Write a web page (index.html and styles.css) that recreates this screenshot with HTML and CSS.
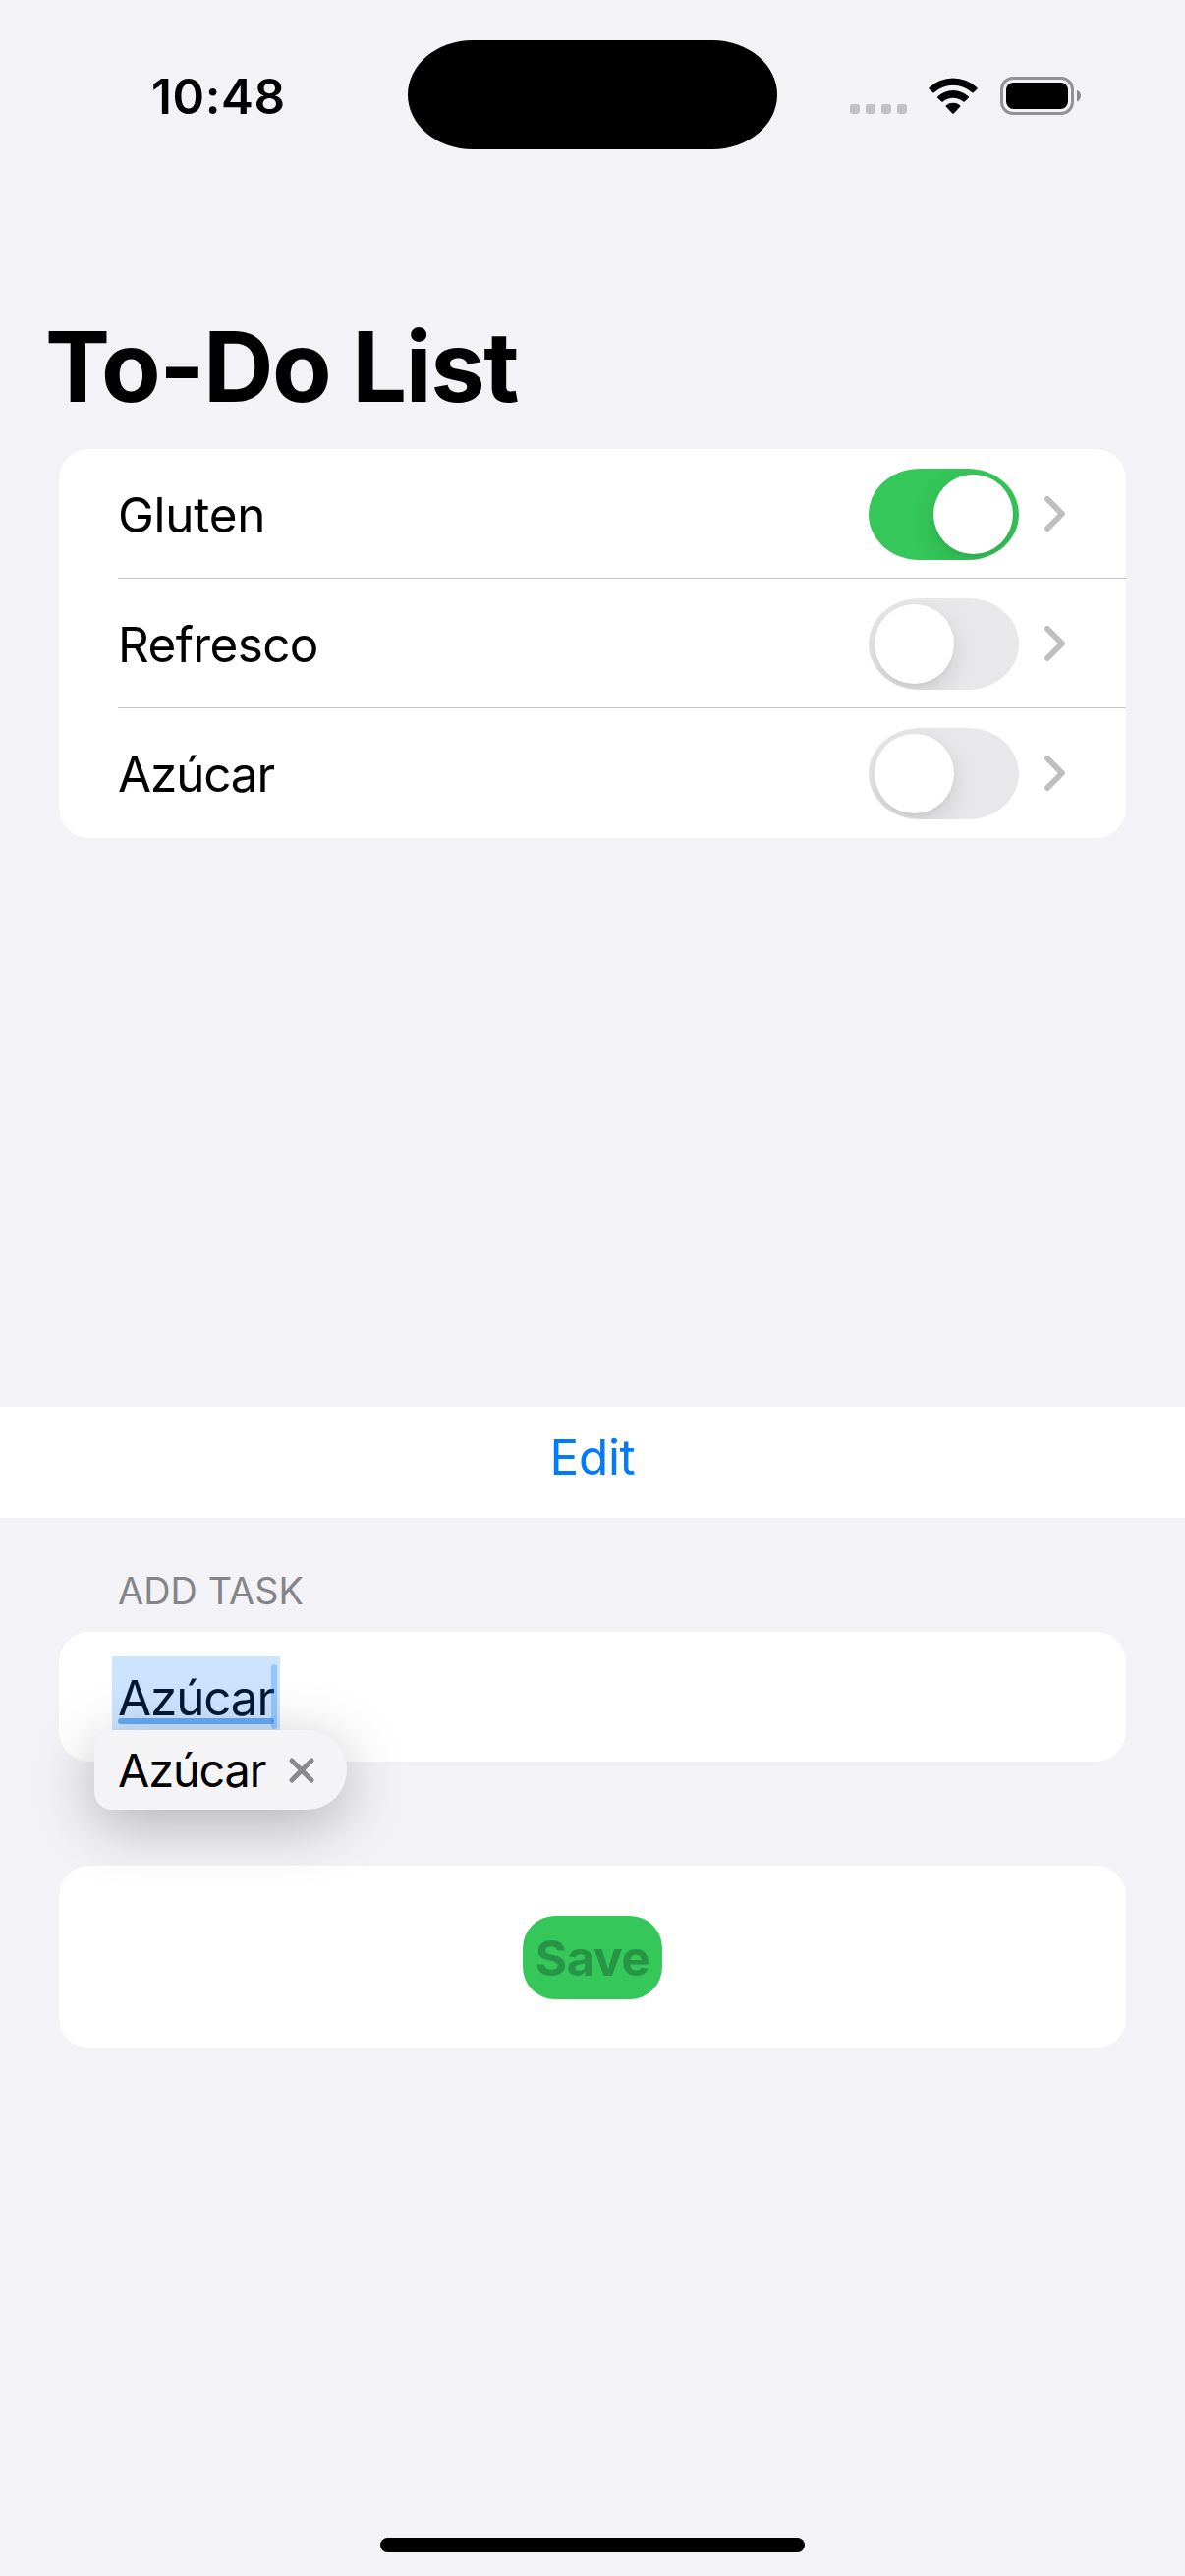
FILE: index.html
```html
<!DOCTYPE html>
<html lang="en">
<head>
<meta charset="utf-8">
<title>To-Do List</title>
<link rel="stylesheet" href="styles.css">
</head>
<body>
<div class="screen">
  <header class="status">
    <div class="time"><span>10:48</span></div>
    <div class="island"></div>
    <div class="indicators">
      <div class="dots"><i></i><i></i><i></i><i></i></div>
      <svg class="wifi" width="50" height="38" viewBox="0 0 50 38">
        <path d="M0.6 10.3A35.5 35.5 0 0 1 49.4 10.3Q50 11 49.4 11.7L45.6 15.2Q45 15.8 44.3 15.2A29 29 0 0 0 5.7 15.2Q5 15.8 4.4 15.2L0.6 11.7Q0 11 0.6 10.3Z"/>
        <path d="M9.3 19.3A23 23 0 0 1 40.7 19.3Q41.4 20 40.7 20.7L36.7 24.4Q36 25 35.3 24.4A16 16 0 0 0 14.7 24.4Q14 25 13.3 24.4L9.3 20.7Q8.6 20 9.3 19.3Z"/>
        <path d="M17.9 28.3A11.5 11.5 0 0 1 32.1 28.3Q32.8 29 32.1 29.7L25.7 36.6Q25 37.3 24.3 36.6L17.9 29.7Q17.2 29 17.9 28.3Z"/>
      </svg>
      <svg class="battery" width="82" height="39" viewBox="0 0 82 39">
        <rect x="1.5" y="1.5" width="72" height="36" rx="11.5" fill="none" stroke="#929195" stroke-width="3"/>
        <rect x="6" y="6" width="63" height="27" rx="7.5"/>
        <path d="M78 13.5Q82 15.5 82 19.5T78 25.500Z" fill="#8a898d"/>
      </svg>
    </div>
  </header>

  <h1 class="title">To-Do List</h1>

  <ul class="card list">
    <li class="row"><div class="cell"><span class="label gluten">Gluten</span><span class="toggle on"><b></b></span><svg class="chevron" width="22" height="38" viewBox="0 0 22 38"><path d="M3 4L18 19L3 34"/></svg></div></li>
    <li class="row"><div class="cell"><span class="label refresco">Refresco</span><span class="toggle"><b></b></span><svg class="chevron" width="22" height="38" viewBox="0 0 22 38"><path d="M3 4L18 19L3 34"/></svg></div></li>
    <li class="row"><div class="cell"><span class="label azucar">Azúcar</span><span class="toggle"><b></b></span><svg class="chevron" width="22" height="38" viewBox="0 0 22 38"><path d="M3 4L18 19L3 34"/></svg></div></li>
  </ul>

  <div class="edit"><span>Edit</span></div>

  <h2 class="section">ADD TASK</h2>
  <div class="card field">
    <span class="label azucar">Azúcar</span>
    <div class="underline"></div>
    <div class="caret"></div>
    <div class="selection"></div>
    <div class="suggestion">
      <span>Azúcar</span>
      <svg width="26" height="26" viewBox="0 0 26 26"><path d="M3 3L23 23M23 3L3 23"/></svg>
    </div>
  </div>

  <div class="card save"><button class="button">Save</button></div>

  <div class="home"></div>
</div>
</body>
</html>
```
FILE: styles.css
```css
* { box-sizing: border-box; }

body {
  margin: 0;
  background: #f2f2f7;
  color: #000;
  font-family: Inter, "Liberation Sans", sans-serif;
  font-size: 49.4px;
}

.screen {
  width: 1206px;
  height: 2622px;
  display: flex;
  flex-direction: column;
  overflow: hidden;
}

.status {
  height: 196px;
  flex: none;
  display: grid;
  grid-template-columns: 415px 376px 1fr;
}

.time {
  height: 196px;
  padding-left: 154px;
  line-height: 196px;
  font-weight: 600;
  letter-spacing: 0.6px;
}

.island {
  height: 111px;
  margin-top: 41px;
  background: #000;
  border-radius: 66px / 55.5px;
}

.indicators {
  display: flex;
  height: 39px;
  margin-top: 78px;
  padding-left: 74px;
}

.dots { display: flex; gap: 6px; padding-top: 28px; }
.dots i { width: 10px; height: 10px; border-radius: 3px; background: #c1c0c5; }
.wifi { margin-left: 22px; margin-top: 1px; }
.battery { margin-left: 23px; }

.title {
  margin: 127px 0 0;
  padding-left: 46px;
  height: 100px;
  line-height: 100px;
  font-size: 99px;
  font-weight: 700;
  letter-spacing: -1.45px;
}

.card {
  flex: none;
  margin: 0 60px;
  background: #fff;
  border-radius: 31px;
}

.list { list-style: none; padding: 0; margin-top: 34px; }
.row { height: 132px; padding-left: 60px; }
.cell {
  height: 132px;
  display: flex;
  align-items: center;
  padding-right: 61px;
  border-bottom: 1px solid #c6c6c8;
}
.row:last-child .cell { border-bottom-color: transparent; }
.label { line-height: 60px; padding-top: 2px; }
.gluten { letter-spacing: -0.25px; }
.refresco { letter-spacing: -0.6px; }
.azucar { letter-spacing: -1.1px; }

.toggle {
  width: 153px;
  height: 93px;
  margin: 1px 26px 0 auto;
  padding: 6px;
  display: flex;
  background: #e8e8ea;
  border-radius: 52px / 46.5px;
  overflow: hidden;
}
.toggle b {
  width: 81px;
  height: 81px;
  border-radius: 50%;
  background: #fff;
  box-shadow: 0 9px 24px rgba(0, 0, 0, 0.13), 0 3px 3px rgba(0, 0, 0, 0.03);
}
.toggle.on { background: #35c759; justify-content: flex-end; }

.chevron { flex: none; margin-top: 1px; }
.chevron path {
  fill: none;
  stroke: #bfbfbf;
  stroke-width: 6;
  stroke-linecap: round;
  stroke-linejoin: round;
}

.edit {
  flex: none;
  height: 113px;
  margin-top: 579px;
  line-height: 102px;
  text-align: center;
  background: #fff;
  color: #007aff;
  letter-spacing: -0.3px;
}

.section {
  flex: none;
  height: 48px;
  margin: 50px 0 18px;
  padding-left: 120px;
  line-height: 48px;
  font-size: 37.8px;
  font-weight: 400;
  letter-spacing: 0.1px;
  color: #858589;
}

.field {
  position: relative;
  height: 132px;
  padding: 35px 60px;
  display: flex;
}
.underline {
  position: absolute;
  left: 60px;
  top: 88px;
  width: 159px;
  height: 6px;
  border-radius: 3px;
  background: #80b8f7;
}
.caret {
  position: absolute;
  left: 216px;
  top: 33px;
  width: 6px;
  height: 66px;
  border-radius: 3px;
  background: rgba(0, 122, 255, 0.27);
}
.selection {
  position: absolute;
  left: 54px;
  top: 25px;
  width: 171px;
  height: 76px;
  background: rgba(0, 122, 255, 0.2);
}
.suggestion {
  position: absolute;
  left: 36px;
  top: 100px;
  width: 257px;
  height: 81px;
  padding: 1px 33px 0 24px;
  display: flex;
  align-items: center;
  justify-content: space-between;
  font-size: 46.8px;
  letter-spacing: -1.1px;
  background: #f4f4f6;
  border-radius: 18px 40.5px 40.5px 18px;
  box-shadow: 0 14px 62px rgba(0, 0, 0, 0.27);
}
.suggestion path {
  fill: none;
  stroke: #89898d;
  stroke-width: 5;
  stroke-linecap: round;
}

.save {
  height: 186px;
  margin-top: 106px;
  padding-top: 51px;
  text-align: center;
}
.button {
  width: 142px;
  height: 85px;
  padding: 0;
  border: 0;
  border-radius: 33px;
  background: #35c759;
  color: #289445;
  font: 700 49.4px/86px Inter, "Liberation Sans", sans-serif;
  letter-spacing: -0.5px;
}

.home {
  flex: none;
  width: 432px;
  height: 15px;
  margin: 498px auto 0;
  border-radius: 8px;
  background: #000;
}
```
